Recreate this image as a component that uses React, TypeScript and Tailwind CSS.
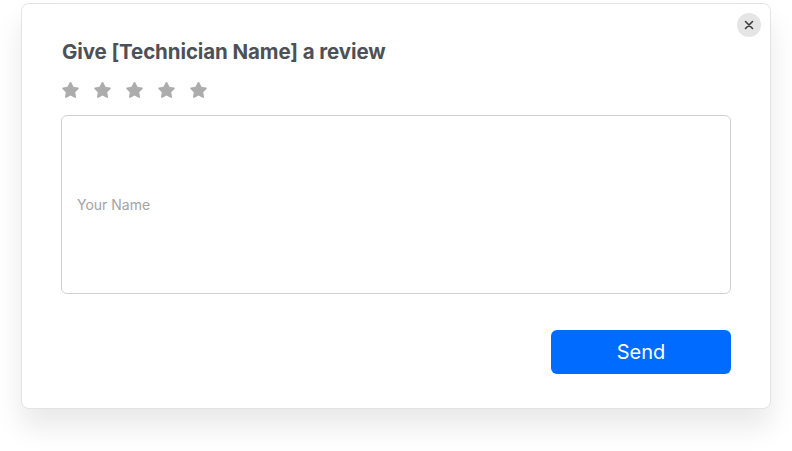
import React from "react";

function Star() {
  return (
    <svg width="17" height="16" viewBox="2.3 2.2 19.4 19" fill="#acacac">
      <path d="M12 2.2c.5 0 .9.3 1.1.7l2.4 4.9 5.4.8c.9.1 1.3 1.3.6 1.9l-3.9 3.8.9 5.4c.2.9-.8 1.6-1.6 1.2L12 18.3l-4.9 2.6c-.8.4-1.8-.3-1.6-1.2l.9-5.4-3.9-3.8c-.7-.6-.3-1.8.6-1.9l5.4-.8 2.4-4.9c.2-.4.6-.7 1.1-.7z" />
    </svg>
  );
}

export default function App() {
  return (
    <div className="w-[792px] h-[451px] bg-white pl-[21px] pt-[3px]" style={{ fontFamily: "Inter, 'Noto Sans', sans-serif" }}>
      <div className="relative w-[750px] h-[406px] bg-white border border-[#e3e3e3] rounded-[8px] shadow-[0_18px_28px_rgba(0,0,0,0.09)] px-[39px] pt-[34px] flex flex-col">
        <button className="absolute right-[9px] top-[9px] w-6 h-6 rounded-full bg-[#e5e5e5] flex items-center justify-center">
          <svg width="12" height="12" viewBox="0 0 12 12" stroke="#3d3d3d" strokeWidth="1.6" strokeLinecap="round">
            <path d="M2.5 2.5l7 7M9.5 2.5l-7 7" />
          </svg>
        </button>
        <h1 className="pl-px text-[20.5px] leading-[28px] font-bold text-[#4d5157] tracking-[-0.1px]">Give [Technician Name] a review</h1>
        <div className="flex gap-[15px] mt-[16px] h-4 items-center pl-px">
          <Star />
          <Star />
          <Star />
          <Star />
          <Star />
        </div>
        <div className="mt-[17px] h-[179px] border border-[#d1d1d1] rounded-[6px] flex items-center px-[15px]">
          <span className="text-[14px] text-[#a3a3a3]">Your Name</span>
        </div>
        <div className="flex justify-end mt-[36px]">
          <button className="w-[180px] h-[44px] rounded-[6px] bg-[#006bff] text-white text-[20px]">Send</button>
        </div>
      </div>
    </div>
  );
}
